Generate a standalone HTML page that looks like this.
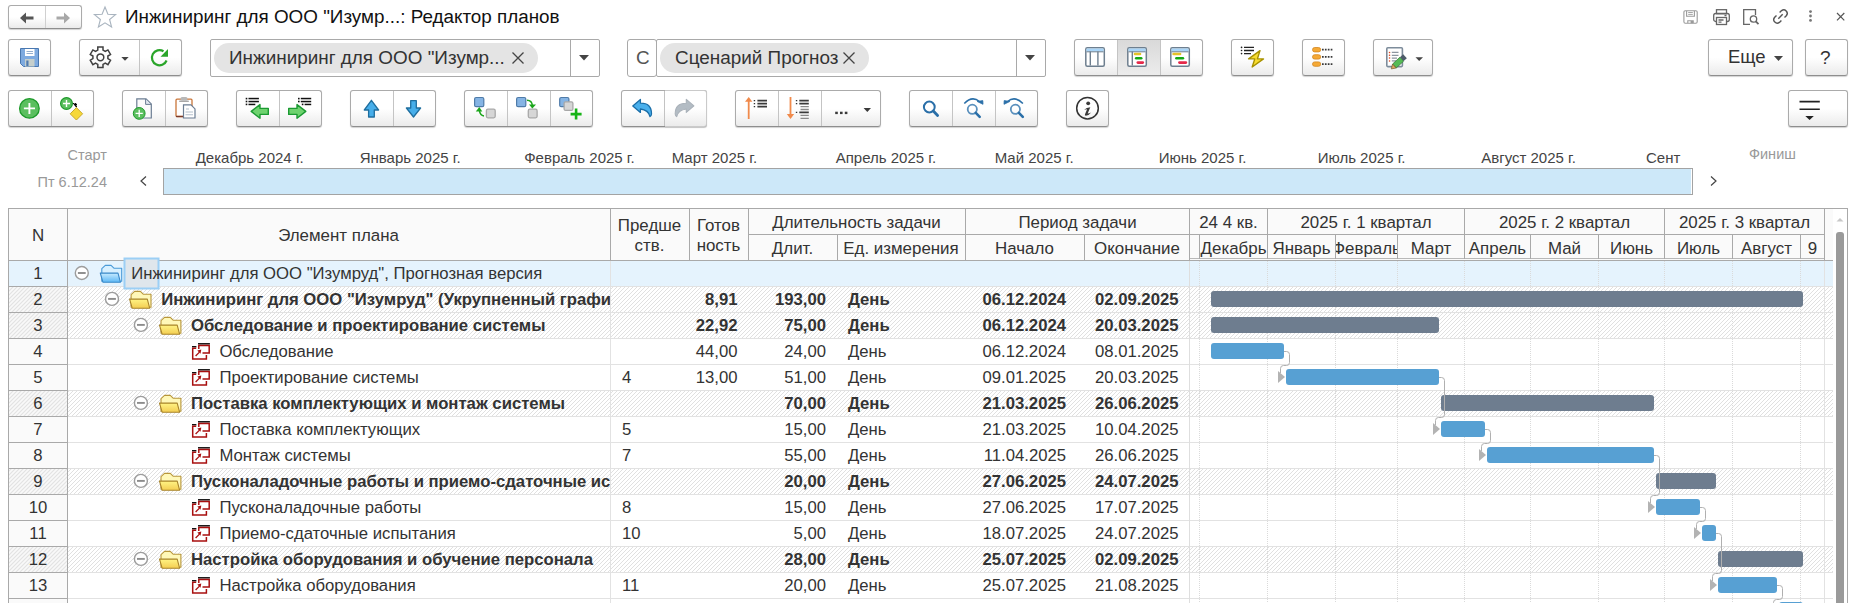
<!DOCTYPE html><html><head><meta charset="utf-8"><style>
*{margin:0;padding:0;box-sizing:border-box}
html,body{width:1865px;height:603px;overflow:hidden;background:#fff;font-family:"Liberation Sans",sans-serif;color:#333}
.a{position:absolute}
.t{position:absolute;white-space:nowrap;line-height:1}
.btn{position:absolute;border:1px solid #ababab;border-bottom-color:#8e8e8e;border-radius:3px;background:linear-gradient(#fff 0,#fff 50%,#ebebeb 100%);box-shadow:0 1px 1px rgba(0,0,0,.18)}
.vd{position:absolute;top:0;bottom:0;width:1px;background:#c4c4c4}
.hl{position:absolute;height:1px}
.vl{position:absolute;width:1px}
.hatch{background:repeating-linear-gradient(135deg,#fff 0,#fff 1.6px,#dedede 1.6px,#dedede 2.83px)}
svg{position:absolute;overflow:visible}
</style></head><body>
<div class="btn" style="left:8px;top:5px;width:74px;height:24px;border-radius:3px"><div class="vd" style="left:36px;background:#d0d0d0"></div></div>
<svg style="left:20px;top:12px" width="14" height="12" viewBox="0 0 14 12"><path d="M0 6 L6 0.5 V4.5 H13.5 V7.5 H6 V11.5 Z" fill="#555"/></svg>
<svg style="left:56px;top:12px" width="14" height="12" viewBox="0 0 14 12"><path d="M14 6 L8 0.5 V4.5 H0.5 V7.5 H8 V11.5 Z" fill="#a8a8a8"/></svg>
<svg style="left:93px;top:6px" width="24" height="22" viewBox="0 0 24 22"><path d="M12 1 L14.9 8.3 L22.6 8.6 L16.6 13.5 L18.6 21 L12 16.8 L5.4 21 L7.4 13.5 L1.4 8.6 L9.1 8.3 Z" fill="none" stroke="#a9b4bf" stroke-width="1.1"/></svg>
<div class="t" style="left:125px;top:8px;font-size:18.85px;color:#111">Инжиниринг для ООО "Изумр...: Редактор планов</div>
<svg style="left:1680px;top:6px" width="22" height="22" viewBox="1680 6 22 22" fill="none" stroke="#9a9a9a" stroke-width="1.1"><rect x="1683.9" y="10.7" width="13.3" height="12.5" rx="1.4"/><path d="M1686.6 10.9 V16.3 H1694.4 V10.9"/><path d="M1688.2 12.5 H1692.8 M1688.2 14.4 H1692.8" stroke-width="0.9"/><path d="M1687.8 23 V20.8 H1693.2 V23"/><rect x="1690.6" y="21" width="2.5" height="2.2" fill="#9a9a9a" stroke="none"/></svg>
<svg style="left:1713px;top:9px" width="17" height="16" viewBox="0 0 17 16" fill="none" stroke="#666" stroke-width="1.3"><rect x="3.5" y="0.7" width="10" height="4"/><rect x="0.7" y="4.5" width="15.6" height="8" rx="2"/><rect x="3.5" y="8.5" width="10" height="7" fill="#fff"/><path d="M5.5 11h5M5.5 13.2h3M11.5 6.5h2"/></svg>
<svg style="left:1743px;top:9px" width="17" height="16" viewBox="0 0 17 16" fill="none" stroke="#666" stroke-width="1.3"><path d="M12.5 6 V0.7 H0.7 V15.3 H7"/><circle cx="10.5" cy="10" r="3.2"/><path d="M12.8 12.4 L15.5 15.2" stroke-width="1.8"/></svg>
<svg style="left:1770px;top:6px" width="22" height="22" viewBox="1770 6 22 22" fill="none" stroke="#555" stroke-width="1.4"><path d="M1779.6 12.6 L1781.6 10.6 A3.5 3.5 0 0 1 1786.5 15.5 L1784.5 17.5"/><path d="M1781.4 20.4 L1779.4 22.4 A3.5 3.5 0 0 1 1774.5 17.5 L1776.5 15.5"/><path d="M1778.3 18.7 L1782.7 14.3"/></svg>
<svg style="left:1808px;top:10px" width="5" height="12" viewBox="0 0 5 12" fill="#777"><circle cx="2.5" cy="1.6" r="1.4"/><circle cx="2.5" cy="6" r="1.4"/><circle cx="2.5" cy="10.4" r="1.4"/></svg>
<svg style="left:1836px;top:12px" width="10" height="10" viewBox="1836 12 10 10" stroke="#555" stroke-width="1.2"><path d="M1837 13 L1844.3 20.3 M1844.3 13 L1837 20.3"/></svg>
<div class="btn" style="left:8px;top:39px;width:43px;height:37px;"></div>
<div class="btn" style="left:79px;top:39px;width:103px;height:37px;"><div class="vd" style="left:59px"></div></div>
<div class="btn" style="left:1231px;top:39px;width:43px;height:37px;"></div>
<div class="btn" style="left:1302px;top:39px;width:43px;height:37px;"></div>
<div class="btn" style="left:1373px;top:39px;width:60px;height:37px;"></div>
<div class="btn" style="left:1708px;top:39px;width:85px;height:37px;"></div>
<div class="btn" style="left:1805px;top:39px;width:43px;height:37px;"></div>
<div class="a" style="left:210px;top:39px;width:390px;height:38px;border:1px solid #a9a9a9;border-radius:2px;background:#fff"><div class="vd" style="left:359px;background:#a9a9a9"></div></div>
<div class="a" style="left:214px;top:43px;width:324px;height:30px;border-radius:15px;background:#e4e4e4"></div>
<div class="t" style="left:229px;top:49px;font-size:18.9px;color:#333">Инжиниринг для ООО "Изумр...</div>
<svg style="left:512px;top:52px" width="12" height="12" viewBox="0 0 12 12" stroke="#444" stroke-width="1.3"><path d="M0.5 0.5 L11.5 11.5 M11.5 0.5 L0.5 11.5"/></svg>
<svg style="left:579px;top:55px" width="10" height="6" viewBox="0 0 10 6"><path d="M0 0 H10 L5 5.5 Z" fill="#444"/></svg>
<div class="a" style="left:627px;top:39px;width:30px;height:38px;border:1px solid #a9a9a9;border-radius:3px;background:#fff"></div>
<div class="t" style="left:636px;top:49px;font-size:18.9px;color:#555">С</div>
<div class="a" style="left:656px;top:39px;width:390px;height:38px;border:1px solid #a9a9a9;border-radius:2px;background:#fff"><div class="vd" style="left:359px;background:#a9a9a9"></div></div>
<div class="a" style="left:660px;top:43px;width:209px;height:30px;border-radius:15px;background:#e4e4e4"></div>
<div class="t" style="left:675px;top:49px;font-size:18.9px;color:#333">Сценарий Прогноз</div>
<svg style="left:843px;top:52px" width="12" height="12" viewBox="0 0 12 12" stroke="#444" stroke-width="1.3"><path d="M0.5 0.5 L11.5 11.5 M11.5 0.5 L0.5 11.5"/></svg>
<svg style="left:1025px;top:55px" width="10" height="6" viewBox="0 0 10 6"><path d="M0 0 H10 L5 5.5 Z" fill="#444"/></svg>
<div class="btn" style="left:1074px;top:39px;width:129px;height:37px"><div class="a" style="left:42px;top:0;width:43px;bottom:0;background:linear-gradient(#d9d9d9,#ececec)"></div><div class="vd" style="left:42px"></div><div class="vd" style="left:85px"></div></div>
<div class="t" style="left:1728px;top:48px;font-size:18.5px;color:#333">Еще</div>
<svg style="left:1774px;top:56px" width="9" height="5" viewBox="0 0 9 5"><path d="M0 0 H9 L4.5 5 Z" fill="#444"/></svg>
<div class="t" style="left:1820px;top:48px;font-size:19px;color:#333">?</div>
<div class="btn" style="left:8px;top:90px;width:86px;height:37px;"><div class="vd" style="left:42px"></div></div>
<div class="btn" style="left:122px;top:90px;width:86px;height:37px;"><div class="vd" style="left:42px"></div></div>
<div class="btn" style="left:236px;top:90px;width:86px;height:37px;"><div class="vd" style="left:42px"></div></div>
<div class="btn" style="left:350px;top:90px;width:86px;height:37px;"><div class="vd" style="left:42px"></div></div>
<div class="btn" style="left:464px;top:90px;width:129px;height:37px;"><div class="vd" style="left:42px"></div><div class="vd" style="left:85px"></div></div>
<div class="btn" style="left:621px;top:90px;width:86px;height:37px;"><div class="vd" style="left:42px"></div></div>
<div class="btn" style="left:735px;top:90px;width:146px;height:37px;"><div class="vd" style="left:42px"></div><div class="vd" style="left:85px"></div></div>
<div class="btn" style="left:909px;top:90px;width:129px;height:37px;"><div class="vd" style="left:42px"></div><div class="vd" style="left:85px"></div></div>
<div class="btn" style="left:1066px;top:90px;width:43px;height:37px;"></div>
<div class="btn" style="left:1788px;top:90px;width:60px;height:37px;"></div>
<div class="a" style="left:665px;top:90px;width:42px;height:37px;border:1px solid #cacaca;border-left:none;border-radius:0 3px 3px 0;background:linear-gradient(#fff 0,#fff 50%,#ebebeb 100%);box-shadow:0 1px 1px rgba(0,0,0,.07)"></div>
<div class="t" style="right:1758px;top:147.5px;font-size:14.5px;color:#999">Старт</div>
<div class="t" style="right:1758px;top:174.5px;font-size:14.5px;color:#999">Пт 6.12.24</div>
<svg style="left:140px;top:176px" width="7" height="10" viewBox="0 0 7 10" fill="none" stroke="#444" stroke-width="1.2"><path d="M6 0.5 L1 5 L6 9.5"/></svg>
<svg style="left:1710px;top:176px" width="7" height="10" viewBox="0 0 7 10" fill="none" stroke="#444" stroke-width="1.2"><path d="M1 0.5 L6 5 L1 9.5"/></svg>
<div class="a" style="left:163px;top:168px;width:1530px;height:27px;background:#cde8f9;border:1px solid #a3a3a3"><div class="a" style="right:0;top:0;bottom:0;width:1px;background:#fff"></div></div>
<div class="t" style="left:195.7px;top:150px;font-size:15px;color:#444">Декабрь 2024 г.</div>
<div class="t" style="left:359.7px;top:150px;font-size:15px;color:#444">Январь 2025 г.</div>
<div class="t" style="left:524.2px;top:150px;font-size:15px;color:#444">Февраль 2025 г.</div>
<div class="t" style="left:671.7px;top:150px;font-size:15px;color:#444">Март 2025 г.</div>
<div class="t" style="left:835.7px;top:150px;font-size:15px;color:#444">Апрель 2025 г.</div>
<div class="t" style="left:994.7px;top:150px;font-size:15px;color:#444">Май 2025 г.</div>
<div class="t" style="left:1158.7px;top:150px;font-size:15px;color:#444">Июнь 2025 г.</div>
<div class="t" style="left:1317.7px;top:150px;font-size:15px;color:#444">Июль 2025 г.</div>
<div class="t" style="left:1481.2px;top:150px;font-size:15px;color:#444">Август 2025 г.</div>
<div class="t" style="left:1646px;top:150px;font-size:15px;color:#444">Сент</div>
<div class="t" style="left:1749px;top:147px;font-size:14.5px;color:#999">Финиш</div><svg style="left:0;top:0" width="1865" height="603" viewBox="0 0 1865 603"><defs><pattern id="h" patternUnits="userSpaceOnUse" width="4" height="4"><path d="M-1 1 L1 -1 M0 4 L4 0 M3 5 L5 3" stroke="#e0e0e0" stroke-width="1"/></pattern><pattern id="h2" patternUnits="userSpaceOnUse" width="4" height="4"><rect width="4" height="4" fill="#f9f9f9"/><path d="M-1 1 L1 -1 M0 4 L4 0 M3 5 L5 3" stroke="#e2e2e2" stroke-width="1.1"/></pattern></defs><rect x="8" y="208" width="1840" height="52" fill="#fafafa"/><rect x="1833" y="208" width="15" height="52" fill="#fff"/><rect x="8" y="260" width="1825" height="26" fill="#e5f3fd"/><rect x="8" y="286" width="1825" height="26" fill="url(#h)"/><rect x="8" y="286" width="59" height="26" fill="url(#h2)"/><rect x="8" y="312" width="1825" height="26" fill="url(#h)"/><rect x="8" y="312" width="59" height="26" fill="url(#h2)"/><rect x="8" y="338" width="59" height="26" fill="#fafafa"/><rect x="8" y="364" width="59" height="26" fill="#fafafa"/><rect x="8" y="390" width="1825" height="26" fill="url(#h)"/><rect x="8" y="390" width="59" height="26" fill="url(#h2)"/><rect x="8" y="416" width="59" height="26" fill="#fafafa"/><rect x="8" y="442" width="59" height="26" fill="#fafafa"/><rect x="8" y="468" width="1825" height="26" fill="url(#h)"/><rect x="8" y="468" width="59" height="26" fill="url(#h2)"/><rect x="8" y="494" width="59" height="26" fill="#fafafa"/><rect x="8" y="520" width="59" height="26" fill="#fafafa"/><rect x="8" y="546" width="1825" height="26" fill="url(#h)"/><rect x="8" y="546" width="59" height="26" fill="url(#h2)"/><rect x="8" y="572" width="59" height="26" fill="#fafafa"/><rect x="8" y="598" width="59" height="26" fill="#fafafa"/><rect x="67" y="286" width="1766" height="1" fill="#e2e2e2"/><rect x="8" y="286" width="59" height="1" fill="#a9a9a9"/><rect x="67" y="312" width="1766" height="1" fill="#e2e2e2"/><rect x="8" y="312" width="59" height="1" fill="#a9a9a9"/><rect x="67" y="338" width="1766" height="1" fill="#e2e2e2"/><rect x="8" y="338" width="59" height="1" fill="#a9a9a9"/><rect x="67" y="364" width="1766" height="1" fill="#e2e2e2"/><rect x="8" y="364" width="59" height="1" fill="#a9a9a9"/><rect x="67" y="390" width="1766" height="1" fill="#e2e2e2"/><rect x="8" y="390" width="59" height="1" fill="#a9a9a9"/><rect x="67" y="416" width="1766" height="1" fill="#e2e2e2"/><rect x="8" y="416" width="59" height="1" fill="#a9a9a9"/><rect x="67" y="442" width="1766" height="1" fill="#e2e2e2"/><rect x="8" y="442" width="59" height="1" fill="#a9a9a9"/><rect x="67" y="468" width="1766" height="1" fill="#e2e2e2"/><rect x="8" y="468" width="59" height="1" fill="#a9a9a9"/><rect x="67" y="494" width="1766" height="1" fill="#e2e2e2"/><rect x="8" y="494" width="59" height="1" fill="#a9a9a9"/><rect x="67" y="520" width="1766" height="1" fill="#e2e2e2"/><rect x="8" y="520" width="59" height="1" fill="#a9a9a9"/><rect x="67" y="546" width="1766" height="1" fill="#e2e2e2"/><rect x="8" y="546" width="59" height="1" fill="#a9a9a9"/><rect x="67" y="572" width="1766" height="1" fill="#e2e2e2"/><rect x="8" y="572" width="59" height="1" fill="#a9a9a9"/><rect x="67" y="598" width="1766" height="1" fill="#e2e2e2"/><rect x="8" y="598" width="59" height="1" fill="#a9a9a9"/><rect x="67" y="624" width="1766" height="1" fill="#e2e2e2"/><rect x="8" y="624" width="59" height="1" fill="#a9a9a9"/><rect x="610" y="260" width="1" height="343" fill="#e2e2e2"/><rect x="1189" y="260" width="1" height="343" fill="#dedede"/><rect x="1824" y="260" width="1" height="343" fill="#e2e2e2"/><line x1="1199.5" y1="261" x2="1199.5" y2="603" stroke="#dadada" stroke-width="1" stroke-dasharray="1 1"/><line x1="1267.5" y1="261" x2="1267.5" y2="603" stroke="#dadada" stroke-width="1" stroke-dasharray="1 1"/><line x1="1335.5" y1="261" x2="1335.5" y2="603" stroke="#dadada" stroke-width="1" stroke-dasharray="1 1"/><line x1="1397.5" y1="261" x2="1397.5" y2="603" stroke="#dadada" stroke-width="1" stroke-dasharray="1 1"/><line x1="1464.5" y1="261" x2="1464.5" y2="603" stroke="#dadada" stroke-width="1" stroke-dasharray="1 1"/><line x1="1530.5" y1="261" x2="1530.5" y2="603" stroke="#dadada" stroke-width="1" stroke-dasharray="1 1"/><line x1="1598.5" y1="261" x2="1598.5" y2="603" stroke="#dadada" stroke-width="1" stroke-dasharray="1 1"/><line x1="1664.5" y1="261" x2="1664.5" y2="603" stroke="#dadada" stroke-width="1" stroke-dasharray="1 1"/><line x1="1732.5" y1="261" x2="1732.5" y2="603" stroke="#dadada" stroke-width="1" stroke-dasharray="1 1"/><line x1="1800.5" y1="261" x2="1800.5" y2="603" stroke="#dadada" stroke-width="1" stroke-dasharray="1 1"/><rect x="8" y="260" width="1825" height="1" fill="#a9a9a9"/><rect x="1189" y="258" width="635" height="1" fill="#b8b8b8"/><rect x="748" y="234" width="442" height="1" fill="#a9a9a9"/><rect x="1189" y="234" width="635" height="1" fill="#a9a9a9"/><rect x="67" y="208" width="1" height="52" fill="#a9a9a9"/><rect x="610" y="208" width="1" height="52" fill="#a9a9a9"/><rect x="689" y="208" width="1" height="52" fill="#a9a9a9"/><rect x="748" y="208" width="1" height="52" fill="#a9a9a9"/><rect x="837" y="234" width="1" height="26" fill="#a9a9a9"/><rect x="965" y="208" width="1" height="52" fill="#a9a9a9"/><rect x="1084" y="234" width="1" height="26" fill="#a9a9a9"/><rect x="1189" y="208" width="1" height="52" fill="#a9a9a9"/><rect x="1824" y="208" width="1" height="52" fill="#a9a9a9"/><rect x="1267" y="208" width="1" height="51" fill="#a9a9a9"/><rect x="1464" y="208" width="1" height="51" fill="#a9a9a9"/><rect x="1664" y="208" width="1" height="51" fill="#a9a9a9"/><rect x="1199" y="234" width="1" height="25" fill="#a9a9a9"/><rect x="1267" y="234" width="1" height="25" fill="#a9a9a9"/><rect x="1335" y="234" width="1" height="25" fill="#a9a9a9"/><rect x="1397" y="234" width="1" height="25" fill="#a9a9a9"/><rect x="1464" y="234" width="1" height="25" fill="#a9a9a9"/><rect x="1530" y="234" width="1" height="25" fill="#a9a9a9"/><rect x="1598" y="234" width="1" height="25" fill="#a9a9a9"/><rect x="1664" y="234" width="1" height="25" fill="#a9a9a9"/><rect x="1732" y="234" width="1" height="25" fill="#a9a9a9"/><rect x="1800" y="234" width="1" height="25" fill="#a9a9a9"/><rect x="67" y="260" width="1" height="343" fill="#a9a9a9"/><rect x="8" y="208" width="1840" height="1" fill="#a9a9a9"/><rect x="8" y="208" width="1" height="395" fill="#a9a9a9"/><rect x="1847" y="208" width="1" height="395" fill="#a9a9a9"/><rect x="1211" y="291" width="592" height="16" rx="3" fill="#6e7d8f"/><rect x="1211" y="317" width="228" height="16" rx="3" fill="#6e7d8f"/><rect x="1211" y="343" width="73" height="16" rx="3" fill="#57a0d3"/><rect x="1286" y="369" width="153" height="16" rx="3" fill="#57a0d3"/><rect x="1441" y="395" width="213" height="16" rx="3" fill="#6e7d8f"/><rect x="1441" y="421" width="44" height="16" rx="3" fill="#57a0d3"/><rect x="1487" y="447" width="167" height="16" rx="3" fill="#57a0d3"/><rect x="1656" y="473" width="60" height="16" rx="3" fill="#6e7d8f"/><rect x="1656" y="499" width="44" height="16" rx="3" fill="#57a0d3"/><rect x="1702" y="525" width="14" height="16" rx="3" fill="#57a0d3"/><rect x="1718" y="551" width="85" height="16" rx="3" fill="#6e7d8f"/><rect x="1718" y="577" width="59" height="16" rx="3" fill="#57a0d3"/><rect x="1779" y="602" width="24" height="16" rx="3" fill="#57a0d3"/><path d="M1284.0 351.5 H1286.5 Q1289.5 351.5 1289.5 354.5 V362.5 Q1289.5 365.5 1286.5 365.5 H1283.5 Q1280.5 365.5 1280.5 368.5 V373.0" fill="none" stroke="#b0b0b0" stroke-width="1"/><path d="M1278.0 371.0 L1285.0 377.0 L1278.0 383.0 Z" fill="#b3b3b3"/><path d="M1439.0 377.5 H1441.5 Q1444.5 377.5 1444.5 380.5 V414.5 Q1444.5 417.5 1441.5 417.5 H1438.5 Q1435.5 417.5 1435.5 420.5 V425.0" fill="none" stroke="#b0b0b0" stroke-width="1"/><path d="M1433.0 423.0 L1440.0 429.0 L1433.0 435.0 Z" fill="#b3b3b3"/><path d="M1485.0 429.5 H1487.5 Q1490.5 429.5 1490.5 432.5 V440.5 Q1490.5 443.5 1487.5 443.5 H1484.5 Q1481.5 443.5 1481.5 446.5 V451.0" fill="none" stroke="#b0b0b0" stroke-width="1"/><path d="M1479.0 449.0 L1486.0 455.0 L1479.0 461.0 Z" fill="#b3b3b3"/><path d="M1654.0 455.5 H1656.5 Q1659.5 455.5 1659.5 458.5 V492.5 Q1659.5 495.5 1656.5 495.5 H1653.5 Q1650.5 495.5 1650.5 498.5 V503.0" fill="none" stroke="#b0b0b0" stroke-width="1"/><path d="M1648.0 501.0 L1655.0 507.0 L1648.0 513.0 Z" fill="#b3b3b3"/><path d="M1700.0 507.5 H1702.5 Q1705.5 507.5 1705.5 510.5 V518.5 Q1705.5 521.5 1702.5 521.5 H1699.5 Q1696.5 521.5 1696.5 524.5 V529.0" fill="none" stroke="#b0b0b0" stroke-width="1"/><path d="M1694.0 527.0 L1701.0 533.0 L1694.0 539.0 Z" fill="#b3b3b3"/><path d="M1716.0 533.5 H1718.5 Q1721.5 533.5 1721.5 536.5 V570.5 Q1721.5 573.5 1718.5 573.5 H1715.5 Q1712.5 573.5 1712.5 576.5 V581.0" fill="none" stroke="#b0b0b0" stroke-width="1"/><path d="M1710.0 579.0 L1717.0 585.0 L1710.0 591.0 Z" fill="#b3b3b3"/><path d="M1777.0 585.5 H1779.5 Q1782.5 585.5 1782.5 588.5 V596.5 Q1782.5 599.5 1779.5 599.5 H1776.5 Q1773.5 599.5 1773.5 602.5 V607.0" fill="none" stroke="#b0b0b0" stroke-width="1"/><path d="M1771.0 605.0 L1778.0 611.0 L1771.0 617.0 Z" fill="#b3b3b3"/><rect x="124.5" y="258.5" width="34" height="30" fill="#dfe6ec" stroke="#9ccff5" stroke-width="2"/><rect x="1836" y="232" width="8" height="380" rx="3" fill="#9a9a9a"/><path d="M1836.5 221.5 L1840 218 L1843.5 221.5 Z" fill="#c8c8c8"/></svg>
<div class="t" style="left:38.0px;top:228.3px;width:0;font-size:16.9px;color:#333;"><div style="position:absolute;transform:translateX(-50%)">N</div></div>
<div class="t" style="left:338.5px;top:228.3px;width:0;font-size:16.9px;color:#333;"><div style="position:absolute;transform:translateX(-50%)">Элемент плана</div></div>
<div class="t" style="left:649.5px;top:217.9px;width:0;font-size:16.9px;color:#333;"><div style="position:absolute;transform:translateX(-50%)">Предше</div></div>
<div class="t" style="left:649.5px;top:238.3px;width:0;font-size:16.9px;color:#333;"><div style="position:absolute;transform:translateX(-50%)">ств.</div></div>
<div class="t" style="left:718.5px;top:217.9px;width:0;font-size:16.9px;color:#333;"><div style="position:absolute;transform:translateX(-50%)">Готов</div></div>
<div class="t" style="left:718.5px;top:238.3px;width:0;font-size:16.9px;color:#333;"><div style="position:absolute;transform:translateX(-50%)">ность</div></div>
<div class="t" style="left:856.5px;top:214.9px;width:0;font-size:16.9px;color:#333;"><div style="position:absolute;transform:translateX(-50%)">Длительность задачи</div></div>
<div class="t" style="left:792.5px;top:240.7px;width:0;font-size:16.9px;color:#333;"><div style="position:absolute;transform:translateX(-50%)">Длит.</div></div>
<div class="t" style="left:901.0px;top:240.7px;width:0;font-size:16.9px;color:#333;"><div style="position:absolute;transform:translateX(-50%)">Ед. измерения</div></div>
<div class="t" style="left:1077.5px;top:214.9px;width:0;font-size:16.9px;color:#333;"><div style="position:absolute;transform:translateX(-50%)">Период задачи</div></div>
<div class="t" style="left:1024.5px;top:240.7px;width:0;font-size:16.9px;color:#333;"><div style="position:absolute;transform:translateX(-50%)">Начало</div></div>
<div class="t" style="left:1137.0px;top:240.7px;width:0;font-size:16.9px;color:#333;"><div style="position:absolute;transform:translateX(-50%)">Окончание</div></div>
<div class="t" style="left:1228.5px;top:214.9px;width:0;font-size:16.9px;color:#333;"><div style="position:absolute;transform:translateX(-50%)">24 4 кв.</div></div>
<div class="t" style="left:1366.0px;top:214.9px;width:0;font-size:16.9px;color:#333;"><div style="position:absolute;transform:translateX(-50%)">2025 г. 1 квартал</div></div>
<div class="t" style="left:1564.5px;top:214.9px;width:0;font-size:16.9px;color:#333;"><div style="position:absolute;transform:translateX(-50%)">2025 г. 2 квартал</div></div>
<div class="t" style="left:1744.5px;top:214.9px;width:0;font-size:16.9px;color:#333;"><div style="position:absolute;transform:translateX(-50%)">2025 г. 3 квартал</div></div>
<div class="a" style="left:1200px;top:235px;width:67px;height:23px;overflow:hidden"><div class="t" style="left:33.5px;top:5.7px;font-size:16.9px;color:#333;transform:translateX(-50%)">Декабрь</div></div>
<div class="a" style="left:1268px;top:235px;width:67px;height:23px;overflow:hidden"><div class="t" style="left:33.5px;top:5.7px;font-size:16.9px;color:#333;transform:translateX(-50%)">Январь</div></div>
<div class="a" style="left:1336px;top:235px;width:61px;height:23px;overflow:hidden"><div class="t" style="left:30.5px;top:5.7px;font-size:16.9px;color:#333;transform:translateX(-50%)">Февраль</div></div>
<div class="a" style="left:1398px;top:235px;width:66px;height:23px;overflow:hidden"><div class="t" style="left:33.0px;top:5.7px;font-size:16.9px;color:#333;transform:translateX(-50%)">Март</div></div>
<div class="a" style="left:1465px;top:235px;width:65px;height:23px;overflow:hidden"><div class="t" style="left:32.5px;top:5.7px;font-size:16.9px;color:#333;transform:translateX(-50%)">Апрель</div></div>
<div class="a" style="left:1531px;top:235px;width:67px;height:23px;overflow:hidden"><div class="t" style="left:33.5px;top:5.7px;font-size:16.9px;color:#333;transform:translateX(-50%)">Май</div></div>
<div class="a" style="left:1599px;top:235px;width:65px;height:23px;overflow:hidden"><div class="t" style="left:32.5px;top:5.7px;font-size:16.9px;color:#333;transform:translateX(-50%)">Июнь</div></div>
<div class="a" style="left:1665px;top:235px;width:67px;height:23px;overflow:hidden"><div class="t" style="left:33.5px;top:5.7px;font-size:16.9px;color:#333;transform:translateX(-50%)">Июль</div></div>
<div class="a" style="left:1733px;top:235px;width:67px;height:23px;overflow:hidden"><div class="t" style="left:33.5px;top:5.7px;font-size:16.9px;color:#333;transform:translateX(-50%)">Август</div></div>
<div class="a" style="left:1801px;top:235px;width:23px;height:23px;overflow:hidden"><div class="t" style="left:11.5px;top:5.7px;font-size:16.9px;color:#333;transform:translateX(-50%)">9</div></div>
<div class="t" style="left:38.0px;top:265.9px;width:0;font-size:16.7px;color:#333;"><div style="position:absolute;transform:translateX(-50%)">1</div></div>
<div class="a" style="left:68px;top:261px;width:542px;height:25px;overflow:hidden"><div class="t" style="left:63.2px;top:4.9px;font-size:16.7px;color:#333;">Инжиниринг для ООО "Изумруд", Прогнозная версия</div></div>
<div class="t" style="left:38.0px;top:291.9px;width:0;font-size:16.7px;color:#333;"><div style="position:absolute;transform:translateX(-50%)">2</div></div>
<div class="a" style="left:68px;top:287px;width:542px;height:25px;overflow:hidden"><div class="t" style="left:93.2px;top:4.9px;font-size:16.7px;color:#333;font-weight:bold;">Инжиниринг для ООО "Изумруд" (Укрупненный график)</div></div>
<div class="t" style="right:1127.5px;top:291.9px;font-size:16.7px;color:#333;font-weight:bold;">8,91</div>
<div class="t" style="right:1039.0px;top:291.9px;font-size:16.7px;color:#333;font-weight:bold;">193,00</div>
<div class="t" style="left:848.0px;top:291.9px;font-size:16.7px;color:#333;font-weight:bold;">День</div>
<div class="t" style="right:799.0px;top:291.9px;font-size:16.7px;color:#333;font-weight:bold;">06.12.2024</div>
<div class="t" style="right:686.5px;top:291.9px;font-size:16.7px;color:#333;font-weight:bold;">02.09.2025</div>
<div class="t" style="left:38.0px;top:317.9px;width:0;font-size:16.7px;color:#333;"><div style="position:absolute;transform:translateX(-50%)">3</div></div>
<div class="a" style="left:68px;top:313px;width:542px;height:25px;overflow:hidden"><div class="t" style="left:123.0px;top:4.9px;font-size:16.7px;color:#333;font-weight:bold;">Обследование и проектирование системы</div></div>
<div class="t" style="right:1127.5px;top:317.9px;font-size:16.7px;color:#333;font-weight:bold;">22,92</div>
<div class="t" style="right:1039.0px;top:317.9px;font-size:16.7px;color:#333;font-weight:bold;">75,00</div>
<div class="t" style="left:848.0px;top:317.9px;font-size:16.7px;color:#333;font-weight:bold;">День</div>
<div class="t" style="right:799.0px;top:317.9px;font-size:16.7px;color:#333;font-weight:bold;">06.12.2024</div>
<div class="t" style="right:686.5px;top:317.9px;font-size:16.7px;color:#333;font-weight:bold;">20.03.2025</div>
<div class="t" style="left:38.0px;top:343.9px;width:0;font-size:16.7px;color:#333;"><div style="position:absolute;transform:translateX(-50%)">4</div></div>
<div class="a" style="left:68px;top:339px;width:542px;height:25px;overflow:hidden"><div class="t" style="left:151.4px;top:4.9px;font-size:16.7px;color:#333;">Обследование</div></div>
<div class="t" style="right:1127.5px;top:343.9px;font-size:16.7px;color:#333;">44,00</div>
<div class="t" style="right:1039.0px;top:343.9px;font-size:16.7px;color:#333;">24,00</div>
<div class="t" style="left:848.0px;top:343.9px;font-size:16.7px;color:#333;">День</div>
<div class="t" style="right:799.0px;top:343.9px;font-size:16.7px;color:#333;">06.12.2024</div>
<div class="t" style="right:686.5px;top:343.9px;font-size:16.7px;color:#333;">08.01.2025</div>
<div class="t" style="left:38.0px;top:369.9px;width:0;font-size:16.7px;color:#333;"><div style="position:absolute;transform:translateX(-50%)">5</div></div>
<div class="a" style="left:68px;top:365px;width:542px;height:25px;overflow:hidden"><div class="t" style="left:151.4px;top:4.9px;font-size:16.7px;color:#333;">Проектирование системы</div></div>
<div class="t" style="left:622.0px;top:369.9px;font-size:16.7px;color:#333;">4</div>
<div class="t" style="right:1127.5px;top:369.9px;font-size:16.7px;color:#333;">13,00</div>
<div class="t" style="right:1039.0px;top:369.9px;font-size:16.7px;color:#333;">51,00</div>
<div class="t" style="left:848.0px;top:369.9px;font-size:16.7px;color:#333;">День</div>
<div class="t" style="right:799.0px;top:369.9px;font-size:16.7px;color:#333;">09.01.2025</div>
<div class="t" style="right:686.5px;top:369.9px;font-size:16.7px;color:#333;">20.03.2025</div>
<div class="t" style="left:38.0px;top:395.9px;width:0;font-size:16.7px;color:#333;"><div style="position:absolute;transform:translateX(-50%)">6</div></div>
<div class="a" style="left:68px;top:391px;width:542px;height:25px;overflow:hidden"><div class="t" style="left:123.0px;top:4.9px;font-size:16.7px;color:#333;font-weight:bold;">Поставка комплектующих и монтаж системы</div></div>
<div class="t" style="right:1039.0px;top:395.9px;font-size:16.7px;color:#333;font-weight:bold;">70,00</div>
<div class="t" style="left:848.0px;top:395.9px;font-size:16.7px;color:#333;font-weight:bold;">День</div>
<div class="t" style="right:799.0px;top:395.9px;font-size:16.7px;color:#333;font-weight:bold;">21.03.2025</div>
<div class="t" style="right:686.5px;top:395.9px;font-size:16.7px;color:#333;font-weight:bold;">26.06.2025</div>
<div class="t" style="left:38.0px;top:421.9px;width:0;font-size:16.7px;color:#333;"><div style="position:absolute;transform:translateX(-50%)">7</div></div>
<div class="a" style="left:68px;top:417px;width:542px;height:25px;overflow:hidden"><div class="t" style="left:151.4px;top:4.9px;font-size:16.7px;color:#333;">Поставка комплектующих</div></div>
<div class="t" style="left:622.0px;top:421.9px;font-size:16.7px;color:#333;">5</div>
<div class="t" style="right:1039.0px;top:421.9px;font-size:16.7px;color:#333;">15,00</div>
<div class="t" style="left:848.0px;top:421.9px;font-size:16.7px;color:#333;">День</div>
<div class="t" style="right:799.0px;top:421.9px;font-size:16.7px;color:#333;">21.03.2025</div>
<div class="t" style="right:686.5px;top:421.9px;font-size:16.7px;color:#333;">10.04.2025</div>
<div class="t" style="left:38.0px;top:447.9px;width:0;font-size:16.7px;color:#333;"><div style="position:absolute;transform:translateX(-50%)">8</div></div>
<div class="a" style="left:68px;top:443px;width:542px;height:25px;overflow:hidden"><div class="t" style="left:151.4px;top:4.9px;font-size:16.7px;color:#333;">Монтаж системы</div></div>
<div class="t" style="left:622.0px;top:447.9px;font-size:16.7px;color:#333;">7</div>
<div class="t" style="right:1039.0px;top:447.9px;font-size:16.7px;color:#333;">55,00</div>
<div class="t" style="left:848.0px;top:447.9px;font-size:16.7px;color:#333;">День</div>
<div class="t" style="right:799.0px;top:447.9px;font-size:16.7px;color:#333;">11.04.2025</div>
<div class="t" style="right:686.5px;top:447.9px;font-size:16.7px;color:#333;">26.06.2025</div>
<div class="t" style="left:38.0px;top:473.9px;width:0;font-size:16.7px;color:#333;"><div style="position:absolute;transform:translateX(-50%)">9</div></div>
<div class="a" style="left:68px;top:469px;width:542px;height:25px;overflow:hidden"><div class="t" style="left:123.0px;top:4.9px;font-size:16.7px;color:#333;font-weight:bold;">Пусконаладочные работы и приемо-сдаточные испытания</div></div>
<div class="t" style="right:1039.0px;top:473.9px;font-size:16.7px;color:#333;font-weight:bold;">20,00</div>
<div class="t" style="left:848.0px;top:473.9px;font-size:16.7px;color:#333;font-weight:bold;">День</div>
<div class="t" style="right:799.0px;top:473.9px;font-size:16.7px;color:#333;font-weight:bold;">27.06.2025</div>
<div class="t" style="right:686.5px;top:473.9px;font-size:16.7px;color:#333;font-weight:bold;">24.07.2025</div>
<div class="t" style="left:38.0px;top:499.9px;width:0;font-size:16.7px;color:#333;"><div style="position:absolute;transform:translateX(-50%)">10</div></div>
<div class="a" style="left:68px;top:495px;width:542px;height:25px;overflow:hidden"><div class="t" style="left:151.4px;top:4.9px;font-size:16.7px;color:#333;">Пусконаладочные работы</div></div>
<div class="t" style="left:622.0px;top:499.9px;font-size:16.7px;color:#333;">8</div>
<div class="t" style="right:1039.0px;top:499.9px;font-size:16.7px;color:#333;">15,00</div>
<div class="t" style="left:848.0px;top:499.9px;font-size:16.7px;color:#333;">День</div>
<div class="t" style="right:799.0px;top:499.9px;font-size:16.7px;color:#333;">27.06.2025</div>
<div class="t" style="right:686.5px;top:499.9px;font-size:16.7px;color:#333;">17.07.2025</div>
<div class="t" style="left:38.0px;top:525.9px;width:0;font-size:16.7px;color:#333;"><div style="position:absolute;transform:translateX(-50%)">11</div></div>
<div class="a" style="left:68px;top:521px;width:542px;height:25px;overflow:hidden"><div class="t" style="left:151.4px;top:4.9px;font-size:16.7px;color:#333;">Приемо-сдаточные испытания</div></div>
<div class="t" style="left:622.0px;top:525.9px;font-size:16.7px;color:#333;">10</div>
<div class="t" style="right:1039.0px;top:525.9px;font-size:16.7px;color:#333;">5,00</div>
<div class="t" style="left:848.0px;top:525.9px;font-size:16.7px;color:#333;">День</div>
<div class="t" style="right:799.0px;top:525.9px;font-size:16.7px;color:#333;">18.07.2025</div>
<div class="t" style="right:686.5px;top:525.9px;font-size:16.7px;color:#333;">24.07.2025</div>
<div class="t" style="left:38.0px;top:551.9px;width:0;font-size:16.7px;color:#333;"><div style="position:absolute;transform:translateX(-50%)">12</div></div>
<div class="a" style="left:68px;top:547px;width:542px;height:25px;overflow:hidden"><div class="t" style="left:123.0px;top:4.9px;font-size:16.7px;color:#333;font-weight:bold;">Настройка оборудования и обучение персонала</div></div>
<div class="t" style="right:1039.0px;top:551.9px;font-size:16.7px;color:#333;font-weight:bold;">28,00</div>
<div class="t" style="left:848.0px;top:551.9px;font-size:16.7px;color:#333;font-weight:bold;">День</div>
<div class="t" style="right:799.0px;top:551.9px;font-size:16.7px;color:#333;font-weight:bold;">25.07.2025</div>
<div class="t" style="right:686.5px;top:551.9px;font-size:16.7px;color:#333;font-weight:bold;">02.09.2025</div>
<div class="t" style="left:38.0px;top:577.9px;width:0;font-size:16.7px;color:#333;"><div style="position:absolute;transform:translateX(-50%)">13</div></div>
<div class="a" style="left:68px;top:573px;width:542px;height:25px;overflow:hidden"><div class="t" style="left:151.4px;top:4.9px;font-size:16.7px;color:#333;">Настройка оборудования</div></div>
<div class="t" style="left:622.0px;top:577.9px;font-size:16.7px;color:#333;">11</div>
<div class="t" style="right:1039.0px;top:577.9px;font-size:16.7px;color:#333;">20,00</div>
<div class="t" style="left:848.0px;top:577.9px;font-size:16.7px;color:#333;">День</div>
<div class="t" style="right:799.0px;top:577.9px;font-size:16.7px;color:#333;">25.07.2025</div>
<div class="t" style="right:686.5px;top:577.9px;font-size:16.7px;color:#333;">21.08.2025</div>
<div class="t" style="left:38.0px;top:603.9px;width:0;font-size:16.7px;color:#333;"><div style="position:absolute;transform:translateX(-50%)">14</div></div>
<div class="a" style="left:68px;top:599px;width:542px;height:25px;overflow:hidden"><div class="t" style="left:151.4px;top:4.9px;font-size:16.7px;color:#333;">Обучение персонала</div></div>
<div class="t" style="left:622.0px;top:603.9px;font-size:16.7px;color:#333;">13</div>
<div class="t" style="right:1039.0px;top:603.9px;font-size:16.7px;color:#333;">8,00</div>
<div class="t" style="left:848.0px;top:603.9px;font-size:16.7px;color:#333;">День</div>
<div class="t" style="right:799.0px;top:603.9px;font-size:16.7px;color:#333;">22.08.2025</div>
<div class="t" style="right:686.5px;top:603.9px;font-size:16.7px;color:#333;">02.09.2025</div><svg style="left:19px;top:47px" width="21" height="21" viewBox="19 47 21 21" ><path d="M20.5 48.5 H38.5 V66.5 H23.5 L20.5 63.5 Z" fill="#7eaadf" stroke="#4a78b0" stroke-width="1"/>
<rect x="25" y="49" width="9.5" height="7" fill="#fff"/><path d="M26.5 51.5 H33 M26.5 53.5 H33" stroke="#8aa6c8" stroke-width="0.9"/>
<rect x="25" y="59" width="9.5" height="7.5" fill="#c6cfcc"/><rect x="26.3" y="60.5" width="2.2" height="5.5" fill="#4f7ab0"/></svg>
<svg style="left:87px;top:44px" width="27" height="27" viewBox="87 44 27 27" ><path d="M97.80 50.16 L97.80 47.10 L103.00 47.10 L103.00 50.16 L105.28 51.48 L107.93 49.95 L110.53 54.45 L107.88 55.98 L107.88 58.62 L110.53 60.15 L107.93 64.65 L105.28 63.12 L103.00 64.44 L103.00 67.50 L97.80 67.50 L97.80 64.44 L95.52 63.12 L92.87 64.65 L90.27 60.15 L92.92 58.62 L92.92 55.98 L90.27 54.45 L92.87 49.95 L95.52 51.48 Z" fill="none" stroke="#404040" stroke-width="1.5" stroke-linejoin="miter"/><circle cx="100.4" cy="57.3" r="3.4" fill="none" stroke="#404040" stroke-width="1.5"/></svg>
<svg style="left:120px;top:56px" width="10" height="6" viewBox="120 56 10 6" ><path d="M121.3 57 H128.7 L125 60.8 Z" fill="#444"/></svg>
<svg style="left:148px;top:46px" width="24" height="24" viewBox="148 46 24 24" ><path d="M166.6 60.5 A7.6 7.6 0 1 1 163.5 51.2" fill="none" stroke="#2aa52a" stroke-width="2.2"/><path d="M160.5 56.8 L168 56.8 L168 49 Z" fill="#2aa52a"/></svg>
<svg style="left:1084px;top:46px" width="24" height="24" viewBox="1084 46 24 24" ><rect x="1085.8" y="47.8" width="18.5" height="18.5" rx="1.5" fill="#fff" stroke="#6e7f8f" stroke-width="1.5"/><rect x="1086.5" y="48.5" width="17" height="3" fill="#a9d5f8"/><rect x="1086.5" y="51.3" width="17" height="1" fill="#6e7f8f"/><rect x="1089.6" y="51.5" width="1.4" height="14" fill="#6e7f8f"/><rect x="1097.2" y="51.5" width="1.4" height="14" fill="#6e7f8f"/></svg>
<svg style="left:1126px;top:46px" width="24" height="24" viewBox="1126 46 24 24" ><rect x="1127.8" y="47.8" width="18.5" height="18.5" rx="1.5" fill="#fff" stroke="#6e7f8f" stroke-width="1.5"/><rect x="1128.5" y="48.5" width="17" height="3" fill="#a9d5f8"/><rect x="1128.5" y="51.3" width="17" height="1" fill="#6e7f8f"/><rect x="1131.6" y="51.5" width="1.4" height="14" fill="#6e7f8f"/><path d="M1135.0 54.0 h5.0" stroke="#e5c22a" stroke-width="2.6" stroke-linecap="round"/><path d="M1136.2 58.3 h5.0" stroke="#13a813" stroke-width="2.6" stroke-linecap="round"/><path d="M1137.8 62.6 h5.0" stroke="#e5294a" stroke-width="2.6" stroke-linecap="round"/></svg>
<svg style="left:1169px;top:46px" width="24" height="24" viewBox="1169 46 24 24" ><rect x="1170.8" y="47.8" width="18.5" height="18.5" rx="1.5" fill="#fff" stroke="#6e7f8f" stroke-width="1.5"/><rect x="1171.5" y="48.5" width="17" height="3" fill="#a9d5f8"/><rect x="1171.5" y="51.3" width="17" height="1" fill="#6e7f8f"/><path d="M1173.6 54.0 h6.5" stroke="#e5c22a" stroke-width="2.6" stroke-linecap="round"/><path d="M1176.4 58.3 h6.5" stroke="#13a813" stroke-width="2.6" stroke-linecap="round"/><path d="M1179.4 62.6 h6.5" stroke="#e5294a" stroke-width="2.6" stroke-linecap="round"/></svg>
<svg style="left:1238px;top:44px" width="30" height="28" viewBox="1238 44 30 28" ><path d="M1241.5 47.4 h0.1 M1241.5 50.5 h0.1 M1241.5 53.6 h0.1" stroke="#222" stroke-width="1.6" stroke-linecap="round"/>
<path d="M1244 47.4 H1254 M1244 50.5 H1254 M1244 53.6 H1251" stroke="#222" stroke-width="1.4"/>
<path d="M1260 50.6 L1248.6 58.9 L1254.8 58.9 L1252.2 67 L1263.5 58.9 L1257.4 58.9 Z" fill="#f8dc30" stroke="#a89200" stroke-width="1.4" stroke-linejoin="round"/></svg>
<svg style="left:1310px;top:45px" width="26" height="24" viewBox="1310 45 26 24" ><rect x="1312.5" y="47.5" width="8.2" height="4.4" rx="2.2" fill="#f5a935" stroke="#d3871f" stroke-width="0.8"/><path d="M1322 49.7 H1333" stroke="#3a3a3a" stroke-width="1.8" stroke-dasharray="1.7 1.2"/><rect x="1312.5" y="54.7" width="8.2" height="4.4" rx="2.2" fill="#f5a935" stroke="#d3871f" stroke-width="0.8"/><path d="M1322 56.9 H1333" stroke="#3a3a3a" stroke-width="1.8" stroke-dasharray="1.7 1.2"/><rect x="1312.5" y="61.9" width="8.2" height="4.4" rx="2.2" fill="#f5a935" stroke="#d3871f" stroke-width="0.8"/><path d="M1322 64.1 H1333" stroke="#3a3a3a" stroke-width="1.8" stroke-dasharray="1.7 1.2"/></svg>
<svg style="left:1384px;top:45px" width="40" height="26" viewBox="1384 45 40 26" ><rect x="1386.8" y="47.8" width="15.6" height="18.8" rx="1" fill="#fff" stroke="#7d8c9b" stroke-width="1.6"/>
<path d="M1389.5 52.4 h0.1 M1389.5 55.3 h0.1 M1389.5 58.1 h0.1 M1389.5 60.9 h0.1" stroke="#e04a20" stroke-width="1.5" stroke-linecap="round"/>
<path d="M1391.8 52.4 H1398.5 M1391.8 55.3 H1398.5 M1391.8 58.1 H1397 M1391.8 60.9 H1396" stroke="#8d96a0" stroke-width="1.2"/>
<path d="M1396.22 68.02 L1403.68 61.10 L1400.01 57.14 L1392.54 64.06 Z" fill="#55bb55" stroke="#2d6e2d" stroke-width="0.7"/><path d="M1403.68 61.10 L1406.84 58.18 L1403.16 54.22 L1400.01 57.14 Z" fill="#4e5c6a"/><path d="M1391.30 68.90 L1396.22 68.02 L1392.54 64.06 Z" fill="#d8a860" stroke="#6a4a20" stroke-width="0.6"/>
<path d="M1415.5 57.3 H1423 L1419.2 61 Z" fill="#444"/></svg>
<svg style="left:17px;top:96px" width="26" height="26" viewBox="17 96 26 26" ><circle cx="29.4" cy="108.4" r="9.8" fill="#5bbf5f" stroke="#1e9a2b" stroke-width="1.3"/><path d="M23.9 108.4 H35 M29.4 102.9 V114" stroke="#fff" stroke-width="1.9"/></svg>
<svg style="left:58px;top:95px" width="28" height="26" viewBox="58 95 28 26" ><path d="M73 103.5 H76.5 V108" stroke="#111" stroke-width="1" stroke-dasharray="1 1"/>
<path d="M76.4 107.6 L82.6 113.8 L76.4 120 L70.2 113.8 Z" fill="#f6d83a" stroke="#c9a92a" stroke-width="1"/>
<circle cx="66.5" cy="103.5" r="5.9" fill="#5bbf5f" stroke="#1e9a2b" stroke-width="1.2"/><path d="M63 103.5 H70 M66.5 100 V107" stroke="#fff" stroke-width="1.4"/></svg>
<svg style="left:130px;top:96px" width="26" height="26" viewBox="130 96 26 26" ><path d="M136.8 98.8 H146 L151.3 104.1 V118 H136.8 Z" fill="#fbfbfb" stroke="#6b7d93" stroke-width="1.2"/><path d="M145.6 99 V104.4 H151" fill="#dfe6ee" stroke="#6b7d93" stroke-width="1"/>
<circle cx="139.2" cy="113.4" r="5.9" fill="#5bbf5f" stroke="#1e9a2b" stroke-width="1"/><path d="M135.6 113.4 H142.8 M139.2 109.8 V117" stroke="#fff" stroke-width="1.3"/></svg>
<svg style="left:172px;top:95px" width="26" height="26" viewBox="172 95 26 26" ><rect x="176" y="99.2" width="16" height="17.3" rx="1" fill="#fff" stroke="#c9763a" stroke-width="1.3"/>
<path d="M176 116.5 H183" stroke="#7a3a2a" stroke-width="1.3"/>
<rect x="180.5" y="97" width="7" height="3.6" rx="1.5" fill="#b8b8b8"/><rect x="179" y="100.5" width="10" height="1.6" rx="0.8" fill="#a8a8a8"/>
<path d="M183.5 104.9 H191 L195 108.9 V118 H183.5 Z" fill="#fff" stroke="#6b7d93" stroke-width="1.2"/>
<path d="M186 109 H189 M185.5 112 H193 M185.5 114.8 H193" stroke="#b4bfcb" stroke-width="1.1"/></svg>
<svg style="left:244px;top:95px" width="30" height="26" viewBox="244 95 30 26" ><rect x="245.7" y="97.8" width="1.6" height="1.6" fill="#111"/><rect x="248.5" y="97.8" width="10.4" height="1.5" fill="#111"/><rect x="245.7" y="100.7" width="1.6" height="1.6" fill="#111"/><rect x="248.5" y="100.8" width="10.4" height="1.5" fill="#111"/><rect x="245.7" y="103.6" width="1.6" height="1.6" fill="#111"/><rect x="248.5" y="103.7" width="6.8" height="1.5" fill="#111"/><path d="M251.2 111.4 L260 104.6 V108.4 H268.3 V114.4 H260 V118.2 Z" fill="#6fd36f" stroke="#1b9a32" stroke-width="1.4" stroke-linejoin="round"/></svg>
<svg style="left:286px;top:95px" width="30" height="26" viewBox="286 95 30 26" ><rect x="298.0" y="97.8" width="1.6" height="1.6" fill="#111"/><rect x="300.8" y="97.8" width="10.4" height="1.5" fill="#111"/><rect x="298.0" y="100.7" width="1.6" height="1.6" fill="#111"/><rect x="300.8" y="100.8" width="10.4" height="1.5" fill="#111"/><rect x="301.8" y="103.6" width="1.6" height="1.6" fill="#111"/><rect x="304.6" y="103.7" width="6.6" height="1.5" fill="#111"/><path d="M305.8 111.4 L297 104.6 V108.4 H288.7 V114.4 H297 V118.2 Z" fill="#6fd36f" stroke="#1b9a32" stroke-width="1.4" stroke-linejoin="round"/></svg>
<svg style="left:362px;top:98px" width="20" height="22" viewBox="362 98 20 22" ><path d="M371.4 100.3 L378.6 110 H374.3 V117 H368.6 V110 H364.3 Z" fill="#47aeea" stroke="#1f6e9e" stroke-width="1.3" stroke-linejoin="round"/></svg>
<svg style="left:404px;top:98px" width="20" height="22" viewBox="404 98 20 22" ><path d="M413.5 117 L420.6 108 H416.3 V100.6 H410.7 V108 H406.4 Z" fill="#47aeea" stroke="#1f6e9e" stroke-width="1.3" stroke-linejoin="round"/></svg>
<svg style="left:470px;top:94px" width="30" height="28" viewBox="470 94 30 28" ><rect x="474.6" y="97.5" width="9.2" height="9.2" rx="1.5" fill="#85b4e4" stroke="#4f7ba8" stroke-width="1.2"/><rect x="486.4" y="109.2" width="8.8" height="8.6" rx="1.5" fill="#d6d6d6" stroke="#a8a8a8" stroke-width="1.3"/><path d="M484 116 Q480 115.5 479.3 110" fill="none" stroke="#1aa61a" stroke-width="1.5"/><path d="M475.8 111.5 L479.3 107 L482.3 111.5 Z" fill="#1aa61a"/></svg>
<svg style="left:512px;top:94px" width="30" height="28" viewBox="512 94 30 28" ><rect x="516.6" y="97.5" width="9.2" height="9.2" rx="1.5" fill="#85b4e4" stroke="#4f7ba8" stroke-width="1.2"/><rect x="528.3" y="109.2" width="8.8" height="8.6" rx="1.5" fill="#d6d6d6" stroke="#a8a8a8" stroke-width="1.3"/><path d="M527 100.3 Q532 100.5 532.3 105.5" fill="none" stroke="#1aa61a" stroke-width="1.5"/><path d="M529 104.5 L532.3 108.5 L536 104.5 Z" fill="#1aa61a"/></svg>
<svg style="left:555px;top:94px" width="30" height="28" viewBox="555 94 30 28" ><rect x="559.7" y="97.5" width="9.2" height="9.2" rx="1.5" fill="#85b4e4" stroke="#4f7ba8" stroke-width="1.2"/><rect x="564.1" y="101.8" width="8.8" height="8.6" rx="1.5" fill="#d6d6d6" stroke="#a8a8a8" stroke-width="1.3"/><path d="M570.6 114.1 H581.6 M576.1 108.6 V119.6" stroke="#17b317" stroke-width="2.6"/></svg>
<svg style="left:628px;top:96px" width="28" height="24" viewBox="628 96 28 24" ><path d="M632.8 105.9 L640.4 99.4 V103.2 Q651.6 103 651.5 114 Q651.2 116.5 650 116.6 Q648.5 110 640.4 109 V112.4 Z" fill="#4ab0ec" stroke="#1a6ea8" stroke-width="1.3" stroke-linejoin="round"/></svg>
<svg style="left:670px;top:96px" width="28" height="24" viewBox="670 96 28 24" ><path d="M693.9 105.9 L686.3 99.4 V103.2 Q675.1 103 675.2 114 Q675.5 116.5 676.7 116.6 Q678.2 110 686.3 109 V112.4 Z" fill="#b3bcc4" stroke="#a9b1b9" stroke-width="1.1" stroke-linejoin="round"/></svg>
<svg style="left:742px;top:95px" width="30" height="26" viewBox="742 95 30 26" ><path d="M748.7 100 V119" stroke="#f08a4b" stroke-width="1.8"/><path d="M745 101.8 L748.7 97 L752.4 101.8 Z" fill="#f08a4b"/>
<path d="M754.4 100.7 h0.1 M754.4 103.6 h0.1 M754.4 106.6 h0.1" stroke="#333" stroke-width="1.3" stroke-linecap="square"/>
<path d="M757.4 100.7 H767 M757.4 103.6 H767 M757.4 106.6 H767" stroke="#3a3a3a" stroke-width="1.7"/></svg>
<svg style="left:784px;top:95px" width="30" height="26" viewBox="784 95 30 26" ><path d="M790.5 97 V116" stroke="#f08a4b" stroke-width="1.8"/><path d="M786.8 114 L790.5 119 L794.2 114 Z" fill="#f08a4b"/>
<path d="M799.3 100.7 H808.8 M799.3 103.6 H808.8 M799.3 112.4 H808.8" stroke="#3a3a3a" stroke-width="1.7"/>
<path d="M800.5 106.6 H808.8 M800.5 109.5 H808.8 M800.5 115.4 H808.8 M800.5 118.3 H808.8" stroke="#8a8a8a" stroke-width="1.3"/>
<path d="M796.5 100.7 h0.1 M796.5 103.6 h0.1 M796.5 112.4 h0.1" stroke="#333" stroke-width="1.3" stroke-linecap="square"/></svg>
<svg style="left:830px;top:104px" width="45" height="12" viewBox="830 104 45 12" ><rect x="835.2" y="111.7" width="2.6" height="2.4" fill="#3a3a3a"/><rect x="840" y="111.7" width="2.6" height="2.4" fill="#3a3a3a"/><rect x="844.8" y="111.7" width="2.6" height="2.4" fill="#3a3a3a"/><path d="M863.6 108.1 H871 L867.3 112 Z" fill="#3a3a3a"/></svg>
<svg style="left:918px;top:96px" width="26" height="26" viewBox="918 96 26 26" ><circle cx="929.3" cy="107" r="5.4" fill="none" stroke="#2a6fa8" stroke-width="2"/><path d="M933.3 111 L937.6 115.4" stroke="#2a6fa8" stroke-width="2.8" stroke-linecap="round"/></svg>
<svg style="left:960px;top:94px" width="28" height="28" viewBox="960 94 28 28" ><circle cx="972.3" cy="109.3" r="4.6" fill="none" stroke="#5a90bd" stroke-width="1.8"/><path d="M975.8 112.8 L979.7 116.8" stroke="#2a6fa8" stroke-width="2.6" stroke-linecap="round"/><path d="M964.3 103.5 Q972 95.5 979.5 101.5" fill="none" stroke="#2a6fa8" stroke-width="1.6"/><path d="M977.2 101.5 L983 104.3 L982.8 100.6 Z" fill="#2a6fa8" stroke="#2a6fa8" stroke-width="0.8"/></svg>
<svg style="left:1003px;top:94px" width="28" height="28" viewBox="1003 94 28 28" ><circle cx="1015.4" cy="109.3" r="4.6" fill="none" stroke="#5a90bd" stroke-width="1.8"/><path d="M1018.9 112.8 L1022.8 116.8" stroke="#2a6fa8" stroke-width="2.6" stroke-linecap="round"/><path d="M1022.9 103.5 Q1015 95.5 1007.5 101.5" fill="none" stroke="#2a6fa8" stroke-width="1.6"/><path d="M1009.8 101.5 L1004 104.3 L1004.2 100.6 Z" fill="#2a6fa8" stroke="#2a6fa8" stroke-width="0.8"/></svg>
<svg style="left:1074px;top:95px" width="28" height="28" viewBox="1074 95 28 28" ><circle cx="1087.5" cy="108.2" r="10.8" fill="none" stroke="#333" stroke-width="1.5"/></svg>
<svg style="left:1078px;top:99px" width="18" height="20" viewBox="1078 99 18 20" ><circle cx="1088.2" cy="103.3" r="1.9" fill="#3a3a3a"/><path d="M1084.2 109.7 Q1086.5 107.4 1090.3 107.2 L1087.7 113.5 Q1089.3 113.4 1091.1 112.6 Q1089 115.7 1085.8 115.7 Q1084.4 115.6 1085 114.2 L1087.1 109.3 Q1085.6 109.3 1084.2 109.7 Z" fill="#3a3a3a"/></svg>
<svg style="left:1796px;top:98px" width="28" height="26" viewBox="1796 98 28 26" ><path d="M1799.5 101.6 H1819.8 M1799.5 109.3 H1819.8" stroke="#222" stroke-width="1.6"/><path d="M1805.3 115.9 H1813.8 L1809.55 120 Z" fill="#222"/></svg>
<svg style="left:0;top:0" width="1865" height="603" viewBox="0 0 1865 603"><defs><linearGradient id="gy" x1="0" y1="0" x2="0" y2="1"><stop offset="0" stop-color="#fff484"/><stop offset="1" stop-color="#f3cd52"/></linearGradient><linearGradient id="gb" x1="0" y1="0" x2="0" y2="1"><stop offset="0" stop-color="#c8ebff"/><stop offset="1" stop-color="#5db8f5"/></linearGradient></defs><circle cx="81.8" cy="273.0" r="6.5" fill="#fff" stroke="#9c9c9c" stroke-width="1.4"/><path d="M77.9 273.0 H85.7" stroke="#8c8c8c" stroke-width="1.9"/><path d="M101.8 268.6 L105.3 265.4 L111.1 265.4 L113.9 268.2 L121.7 268.2 L121.7 281.2 L101.8 281.2 Z" fill="#d8f0ff" stroke="#4a9ad8" stroke-width="1.1" stroke-linejoin="round"/><path d="M100.3 273.1 L118.0 273.1 L120.4 282.2 L102.9 282.2 Z" fill="url(#gb)" stroke="#3a88c8" stroke-width="1.1" stroke-linejoin="round"/><circle cx="112.0" cy="298.9" r="6.5" fill="#fff" stroke="#9c9c9c" stroke-width="1.4"/><path d="M108.1 298.9 H115.9" stroke="#8c8c8c" stroke-width="1.9"/><path d="M131.1 294.6 L134.6 291.4 L140.4 291.4 L143.2 294.2 L151.0 294.2 L151.0 307.2 L131.1 307.2 Z" fill="#fff8b8" stroke="#b8963a" stroke-width="1.1" stroke-linejoin="round"/><path d="M129.6 299.1 L147.3 299.1 L149.7 308.2 L132.2 308.2 Z" fill="url(#gy)" stroke="#a8842a" stroke-width="1.1" stroke-linejoin="round"/><circle cx="140.9" cy="324.9" r="6.5" fill="#fff" stroke="#9c9c9c" stroke-width="1.4"/><path d="M137.0 324.9 H144.8" stroke="#8c8c8c" stroke-width="1.9"/><path d="M161.0 320.6 L164.5 317.4 L170.3 317.4 L173.1 320.2 L180.9 320.2 L180.9 333.2 L161.0 333.2 Z" fill="#fff8b8" stroke="#b8963a" stroke-width="1.1" stroke-linejoin="round"/><path d="M159.5 325.1 L177.2 325.1 L179.6 334.2 L162.1 334.2 Z" fill="url(#gy)" stroke="#a8842a" stroke-width="1.1" stroke-linejoin="round"/><path d="M198.0 343.8 H209.9" stroke="#111" stroke-width="1.5"/><path d="M192.0 346.7 H196.4" stroke="#111" stroke-width="1.4"/><path d="M198.8 349.0 V345.4 H209.2 V352.9 H202.5" fill="none" stroke="#a80f0f" stroke-width="1.5"/><path d="M196.2 348.2 H192.7 V359.0 H206.4 V355.0" fill="none" stroke="#a80f0f" stroke-width="1.5"/><path d="M195.6 356.0 L199.5 352.1" stroke="#a80f0f" stroke-width="1.3"/><path d="M197.3 350.6 L201.3 349.6 L200.5 353.8 Z" fill="#a80f0f"/><path d="M198.0 369.8 H209.9" stroke="#111" stroke-width="1.5"/><path d="M192.0 372.7 H196.4" stroke="#111" stroke-width="1.4"/><path d="M198.8 375.0 V371.4 H209.2 V378.9 H202.5" fill="none" stroke="#a80f0f" stroke-width="1.5"/><path d="M196.2 374.2 H192.7 V385.0 H206.4 V381.0" fill="none" stroke="#a80f0f" stroke-width="1.5"/><path d="M195.6 382.0 L199.5 378.1" stroke="#a80f0f" stroke-width="1.3"/><path d="M197.3 376.6 L201.3 375.6 L200.5 379.8 Z" fill="#a80f0f"/><circle cx="140.9" cy="402.9" r="6.5" fill="#fff" stroke="#9c9c9c" stroke-width="1.4"/><path d="M137.0 402.9 H144.8" stroke="#8c8c8c" stroke-width="1.9"/><path d="M161.0 398.6 L164.5 395.4 L170.3 395.4 L173.1 398.2 L180.9 398.2 L180.9 411.2 L161.0 411.2 Z" fill="#fff8b8" stroke="#b8963a" stroke-width="1.1" stroke-linejoin="round"/><path d="M159.5 403.1 L177.2 403.1 L179.6 412.2 L162.1 412.2 Z" fill="url(#gy)" stroke="#a8842a" stroke-width="1.1" stroke-linejoin="round"/><path d="M198.0 421.8 H209.9" stroke="#111" stroke-width="1.5"/><path d="M192.0 424.7 H196.4" stroke="#111" stroke-width="1.4"/><path d="M198.8 427.0 V423.4 H209.2 V430.9 H202.5" fill="none" stroke="#a80f0f" stroke-width="1.5"/><path d="M196.2 426.2 H192.7 V437.0 H206.4 V433.0" fill="none" stroke="#a80f0f" stroke-width="1.5"/><path d="M195.6 434.0 L199.5 430.1" stroke="#a80f0f" stroke-width="1.3"/><path d="M197.3 428.6 L201.3 427.6 L200.5 431.8 Z" fill="#a80f0f"/><path d="M198.0 447.8 H209.9" stroke="#111" stroke-width="1.5"/><path d="M192.0 450.7 H196.4" stroke="#111" stroke-width="1.4"/><path d="M198.8 453.0 V449.4 H209.2 V456.9 H202.5" fill="none" stroke="#a80f0f" stroke-width="1.5"/><path d="M196.2 452.2 H192.7 V463.0 H206.4 V459.0" fill="none" stroke="#a80f0f" stroke-width="1.5"/><path d="M195.6 460.0 L199.5 456.1" stroke="#a80f0f" stroke-width="1.3"/><path d="M197.3 454.6 L201.3 453.6 L200.5 457.8 Z" fill="#a80f0f"/><circle cx="140.9" cy="480.9" r="6.5" fill="#fff" stroke="#9c9c9c" stroke-width="1.4"/><path d="M137.0 480.9 H144.8" stroke="#8c8c8c" stroke-width="1.9"/><path d="M161.0 476.6 L164.5 473.4 L170.3 473.4 L173.1 476.2 L180.9 476.2 L180.9 489.2 L161.0 489.2 Z" fill="#fff8b8" stroke="#b8963a" stroke-width="1.1" stroke-linejoin="round"/><path d="M159.5 481.1 L177.2 481.1 L179.6 490.2 L162.1 490.2 Z" fill="url(#gy)" stroke="#a8842a" stroke-width="1.1" stroke-linejoin="round"/><path d="M198.0 499.8 H209.9" stroke="#111" stroke-width="1.5"/><path d="M192.0 502.7 H196.4" stroke="#111" stroke-width="1.4"/><path d="M198.8 505.0 V501.4 H209.2 V508.9 H202.5" fill="none" stroke="#a80f0f" stroke-width="1.5"/><path d="M196.2 504.2 H192.7 V515.0 H206.4 V511.0" fill="none" stroke="#a80f0f" stroke-width="1.5"/><path d="M195.6 512.0 L199.5 508.1" stroke="#a80f0f" stroke-width="1.3"/><path d="M197.3 506.6 L201.3 505.6 L200.5 509.8 Z" fill="#a80f0f"/><path d="M198.0 525.8 H209.9" stroke="#111" stroke-width="1.5"/><path d="M192.0 528.7 H196.4" stroke="#111" stroke-width="1.4"/><path d="M198.8 531.0 V527.4 H209.2 V534.9 H202.5" fill="none" stroke="#a80f0f" stroke-width="1.5"/><path d="M196.2 530.2 H192.7 V541.0 H206.4 V537.0" fill="none" stroke="#a80f0f" stroke-width="1.5"/><path d="M195.6 538.0 L199.5 534.1" stroke="#a80f0f" stroke-width="1.3"/><path d="M197.3 532.6 L201.3 531.6 L200.5 535.8 Z" fill="#a80f0f"/><circle cx="140.9" cy="558.9" r="6.5" fill="#fff" stroke="#9c9c9c" stroke-width="1.4"/><path d="M137.0 558.9 H144.8" stroke="#8c8c8c" stroke-width="1.9"/><path d="M161.0 554.6 L164.5 551.4 L170.3 551.4 L173.1 554.2 L180.9 554.2 L180.9 567.2 L161.0 567.2 Z" fill="#fff8b8" stroke="#b8963a" stroke-width="1.1" stroke-linejoin="round"/><path d="M159.5 559.1 L177.2 559.1 L179.6 568.2 L162.1 568.2 Z" fill="url(#gy)" stroke="#a8842a" stroke-width="1.1" stroke-linejoin="round"/><path d="M198.0 577.8 H209.9" stroke="#111" stroke-width="1.5"/><path d="M192.0 580.7 H196.4" stroke="#111" stroke-width="1.4"/><path d="M198.8 583.0 V579.4 H209.2 V586.9 H202.5" fill="none" stroke="#a80f0f" stroke-width="1.5"/><path d="M196.2 582.2 H192.7 V593.0 H206.4 V589.0" fill="none" stroke="#a80f0f" stroke-width="1.5"/><path d="M195.6 590.0 L199.5 586.1" stroke="#a80f0f" stroke-width="1.3"/><path d="M197.3 584.6 L201.3 583.6 L200.5 587.8 Z" fill="#a80f0f"/><path d="M198.0 603.8 H209.9" stroke="#111" stroke-width="1.5"/><path d="M192.0 606.7 H196.4" stroke="#111" stroke-width="1.4"/><path d="M198.8 609.0 V605.4 H209.2 V612.9 H202.5" fill="none" stroke="#a80f0f" stroke-width="1.5"/><path d="M196.2 608.2 H192.7 V619.0 H206.4 V615.0" fill="none" stroke="#a80f0f" stroke-width="1.5"/><path d="M195.6 616.0 L199.5 612.1" stroke="#a80f0f" stroke-width="1.3"/><path d="M197.3 610.6 L201.3 609.6 L200.5 613.8 Z" fill="#a80f0f"/></svg></body></html>
